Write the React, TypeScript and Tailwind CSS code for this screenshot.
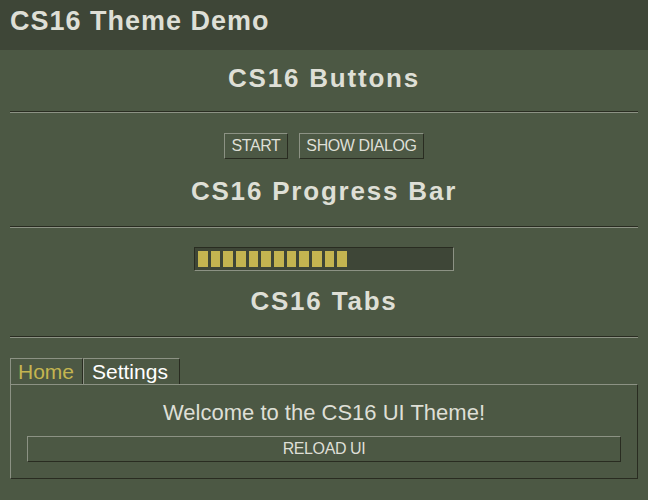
import { useState } from 'react'

// CS16 (Counter-Strike 1.6 VGUI) style demo page
const font = { fontFamily: '"Liberation Sans", Arial, sans-serif' }

function Divider({ className = '' }: { className?: string }) {
  return <div className={`mx-[10px] border-t border-b border-t-[#292c21] border-b-[#8c9284] ${className}`} />
}

function Heading({ children, className = '' }: { children: React.ReactNode; className?: string }) {
  return (
    <h2 className={`text-center text-[26px] leading-[30px] font-bold tracking-[1.8px] text-[#dedfd6] ${className}`}>
      {children}
    </h2>
  )
}

function Button({ children, className = '' }: { children: React.ReactNode; className?: string }) {
  return (
    <button
      className={`h-[26px] border border-t-[#8c9284] border-l-[#8c9284] border-b-[#292c21] border-r-[#292c21] bg-[#4c5844] text-[16px] leading-none tracking-[-0.4px] text-[#dedfd6] ${className}`}
    >
      {children}
    </button>
  )
}

export default function App() {
  const [tab, setTab] = useState<'home' | 'settings'>('home')
  const blocks = Array.from({ length: 12 })

  return (
    <div className="min-h-[500px] bg-[#4c5844] pb-[20px]" style={font}>
      <header className="h-[50px] bg-[#3e4637] px-[10px] pt-[5px]">
        <h1 className="text-[27px] leading-[32px] font-bold tracking-[1px] text-[#dedfd6]">CS16 Theme Demo</h1>
      </header>

      <Heading className="mt-[13px]">CS16 Buttons</Heading>
      <Divider className="mt-[18px]" />
      <div className="mt-[20px] flex justify-center gap-[11px]">
        <Button className="w-[64px]">START</Button>
        <Button className="w-[125px]">SHOW DIALOG</Button>
      </div>

      <Heading className="mt-[17px]">CS16 Progress Bar</Heading>
      <Divider className="mt-[20px]" />
      <div className="mt-[19px] flex justify-center">
        <div className="h-[24px] w-[260px] border border-t-[#292c21] border-l-[#292c21] border-b-[#8c9284] border-r-[#8c9284] bg-[#3e4637] p-[3px]">
          <div className="flex h-full gap-[3px]">
            {blocks.map((_, i) => (
              <div key={i} className="h-full w-[9.67px] bg-[#c4b550]" />
            ))}
          </div>
        </div>
      </div>

      <Heading className="mt-[15px]">CS16 Tabs</Heading>
      <Divider className="mt-[20px]" />

      <div className="mx-[10px] mt-[20px]">
        <div className="flex">
          <button
            onClick={() => setTab('home')}
            className={`h-[26px] w-[73px] border-t border-l border-r border-t-[#8c9284] border-l-[#8c9284] border-r-[#292c21] px-[7px] text-left text-[21px] leading-[24px] ${
              tab === 'home' ? 'text-[#c4b550]' : 'text-white'
            }`}
          >
            Home
          </button>
          <button
            onClick={() => setTab('settings')}
            className={`h-[26px] w-[97px] border-t border-l border-r border-t-[#8c9284] border-l-[#8c9284] border-r-[#292c21] px-[8px] text-left text-[21px] leading-[24px] ${
              tab === 'settings' ? 'text-[#c4b550]' : 'text-white'
            }`}
          >
            Settings
          </button>
        </div>
        <div className="border border-t-[#8c9284] border-l-[#8c9284] border-b-[#292c21] border-r-[#292c21] px-[16px] pt-[15px] pb-[16px]">
          <p className="text-center text-[22px] leading-[26px] text-[#dedfd6]">
            {tab === 'home' ? 'Welcome to the CS16 UI Theme!' : 'Settings'}
          </p>
          <Button className="mt-[10px] w-full">RELOAD UI</Button>
        </div>
      </div>
    </div>
  )
}
